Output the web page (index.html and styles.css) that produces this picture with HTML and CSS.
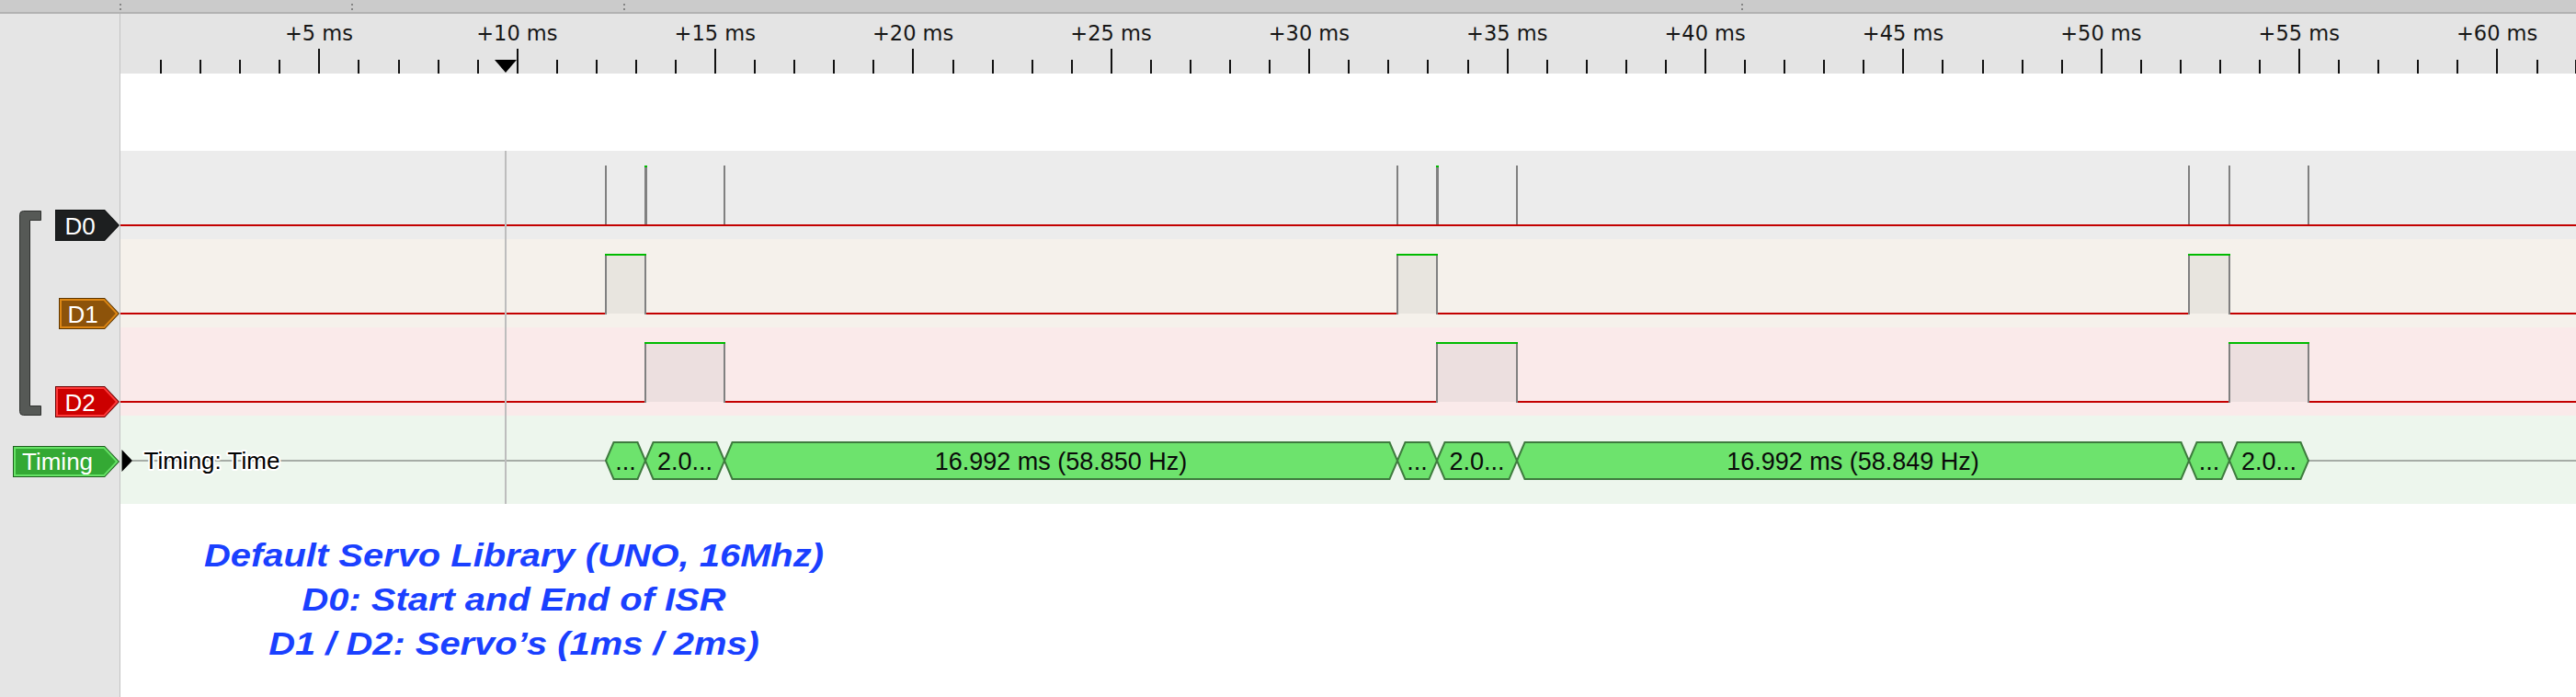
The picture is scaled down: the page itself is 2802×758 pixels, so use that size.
FILE: index.html
```html
<!DOCTYPE html>
<html lang="en">
<head>
<meta charset="utf-8">
<title>Logic capture – Servo timing</title>
<link rel="stylesheet" href="styles.css">
</head>
<body>
<div class="topbar">
  <span></span><i class="grip"></i><span></span><i class="grip"></i><span></span><i class="grip"></i><span></span><i class="grip"></i>
</div>
<div class="app">
  <aside class="sidebar">
    <div class="side-top"></div>
    <div class="group">
      <svg class="bracket" width="24" height="224" viewBox="0 0 24 224">
        <path d="M4.5 0.5H23.5V10.5H11.5V212.5H23.5V222.5H4.5Q0.5 222.5 0.5 218.5V4.5Q0.5 0.5 4.5 0.5Z"/>
      </svg>
      <div class="tags">
        <div class="tag-row">
          <svg class="tag" width="70" height="34" viewBox="0 0 70 34">
            <path class="t-out d0-out" d="M0 0H54L70 17L54 34H0Z"/>
            <path class="t-in d0-in" d="M1 1H53.6L68.6 17L53.6 33H1Z"/>
            <text x="10.5" y="26.5" class="tag-text">D0</text>
          </svg>
        </div>
        <div class="tag-row">
          <svg class="tag" width="66" height="34" viewBox="0 0 66 34">
            <path class="d1-out" d="M0 0H50L66 17L50 34H0Z"/>
            <path class="d1-mid" d="M1 1H49.6L64.6 17L49.6 33H1Z"/>
            <path class="d1-in" d="M3 3H48.8L61.8 17L48.8 31H3Z"/>
            <text x="9.5" y="26.5" class="tag-text">D1</text>
          </svg>
        </div>
        <div class="tag-row">
          <svg class="tag" width="70" height="34" viewBox="0 0 70 34">
            <path class="d2-out" d="M0 0H54L70 17L54 34H0Z"/>
            <path class="d2-mid" d="M1 1H53.6L68.6 17L53.6 33H1Z"/>
            <path class="d2-in" d="M3 3H52.8L65.8 17L52.8 31H3Z"/>
            <text x="10.5" y="26.5" class="tag-text">D2</text>
          </svg>
        </div>
      </div>
    </div>
    <div class="tag-row timing-tag-row">
      <svg class="tag" width="116" height="34" viewBox="0 0 116 34">
        <path class="tm-out" d="M0 0H100L116 17L100 34H0Z"/>
        <path class="tm-mid" d="M1 1H99.6L114.6 17L99.6 33H1Z"/>
        <path class="tm-in" d="M3 3H98.8L111.8 17L98.8 31H3Z"/>
        <text x="10" y="26" class="tag-text">Timing</text>
      </svg>
    </div>
  </aside>

  <main class="content">
    <div class="ruler">
      <div class="ruler-labels">
        <span>+5 ms</span><span>+10 ms</span><span>+15 ms</span><span>+20 ms</span><span>+25 ms</span><span>+30 ms</span>
        <span>+35 ms</span><span>+40 ms</span><span>+45 ms</span><span>+50 ms</span><span>+55 ms</span><span>+60 ms</span>
      </div>
      <svg class="ticks" width="2671" height="27" viewBox="0 0 2671 27">
        <path class="minor" d="M44 12v15M87 12v15M130 12v15M173 12v15M259 12v15M303 12v15M346 12v15M389 12v15M475 12v15M518 12v15M561 12v15M604 12v15M690 12v15M733 12v15M776 12v15M819 12v15M906 12v15M949 12v15M992 12v15M1035 12v15M1121 12v15M1164 12v15M1207 12v15M1250 12v15M1336 12v15M1379 12v15M1422 12v15M1466 12v15M1552 12v15M1595 12v15M1638 12v15M1681 12v15M1767 12v15M1810 12v15M1853 12v15M1896 12v15M1982 12v15M2026 12v15M2069 12v15M2112 12v15M2198 12v15M2241 12v15M2284 12v15M2327 12v15M2413 12v15M2456 12v15M2499 12v15M2542 12v15M2629 12v15M2671 12v15"/>
        <path class="major" d="M216 0v27M432 0v27M647 0v27M862 0v27M1078 0v27M1293 0v27M1509 0v27M1724 0v27M1939 0v27M2155 0v27M2370 0v27M2585 0v27"/>
        <polygon class="cursor-mark" points="407,12 431,12 419,26"/>
      </svg>
    </div>
    <div class="blank"></div>

    <div class="row row-d0">
      <svg class="wave" width="2671" height="96" viewBox="0 0 2671 96">
        <path class="low" d="M0 81H2671"/>
        <path class="edge" d="M528 16V80M657 16V80M1389 16V80M1519 16V80M2250 16V80M2294 16V80M2380 16V80"/>
        <path class="edge thick" d="M571.5 16V80M1432.5 16V80"/>
        <rect class="hi-fill-g" x="570" y="16" width="3" height="2"/>
        <rect class="hi-fill-g" x="1431" y="16" width="3" height="2"/>
        <rect class="cursor" x="418" y="0" width="2" height="96"/>
      </svg>
    </div>

    <div class="row row-d1">
      <svg class="wave" width="2671" height="96" viewBox="0 0 2671 96">
        <rect class="pulse-d1" x="528" y="17" width="43" height="64"/>
        <rect class="pulse-d1" x="1389" y="17" width="43" height="64"/>
        <rect class="pulse-d1" x="2250" y="17" width="44" height="64"/>
        <path class="low" d="M0 81H528M571 81H1389M1432 81H2250M2294 81H2671"/>
        <path class="edge" d="M528 17V82M571 17V82M1389 17V82M1432 17V82M2250 17V82M2294 17V82"/>
        <path class="high" d="M527 17H572M1388 17H1433M2249 17H2295"/>
        <rect class="cursor" x="418" y="0" width="2" height="96"/>
      </svg>
    </div>

    <div class="row row-d2">
      <svg class="wave" width="2671" height="96" viewBox="0 0 2671 96">
        <rect class="pulse-d2" x="571" y="17" width="86" height="64"/>
        <rect class="pulse-d2" x="1432" y="17" width="87" height="64"/>
        <rect class="pulse-d2" x="2294" y="17" width="86" height="64"/>
        <path class="low" d="M0 81H571M657 81H1432M1519 81H2294M2380 81H2671"/>
        <path class="edge" d="M571 17V82M657 17V82M1432 17V82M1519 17V82M2294 17V82M2380 17V82"/>
        <path class="high" d="M570 17H658M1431 17H1520M2293 17H2381"/>
        <rect class="cursor" x="418" y="0" width="2" height="96"/>
      </svg>
    </div>

    <div class="row row-timing">
      <svg class="wave" width="2671" height="96" viewBox="0 0 2671 96">
        <path class="trace" d="M13 49H528M2380 49H2671"/>
        <rect class="cursor" x="418" y="0" width="2" height="96"/>
        <polygon class="expander" points="1.5,37 13,49 1.5,61"/>
        <text class="trace-title" x="25.5" y="57.5">Timing: Time</text>

        <polygon class="bubble" points="528,49 536.5,29 562.5,29 571,49 562.5,69 536.5,69"/>
        <polygon class="bubble" points="571,49 579.5,29 648.5,29 657,49 648.5,69 579.5,69"/>
        <polygon class="bubble" points="657,49 665.5,29 1380.5,29 1389,49 1380.5,69 665.5,69"/>
        <polygon class="bubble" points="1389,49 1397.5,29 1423.5,29 1432,49 1423.5,69 1397.5,69"/>
        <polygon class="bubble" points="1432,49 1440.5,29 1510.5,29 1519,49 1510.5,69 1440.5,69"/>
        <polygon class="bubble" points="1519,49 1527.5,29 2241.5,29 2250,49 2241.5,69 1527.5,69"/>
        <polygon class="bubble" points="2250,49 2258.5,29 2285.5,29 2294,49 2285.5,69 2258.5,69"/>
        <polygon class="bubble" points="2294,49 2302.5,29 2371.5,29 2380,49 2371.5,69 2302.5,69"/>

        <text class="bubble-text" x="549.5" y="59">...</text>
        <text class="bubble-text" x="614" y="59">2.0...</text>
        <text class="bubble-text" x="1023" y="59">16.992 ms (58.850 Hz)</text>
        <text class="bubble-text" x="1410.5" y="59">...</text>
        <text class="bubble-text" x="1475.5" y="59">2.0...</text>
        <text class="bubble-text" x="1884.5" y="59">16.992 ms (58.849 Hz)</text>
        <text class="bubble-text" x="2272" y="59">...</text>
        <text class="bubble-text" x="2337" y="59">2.0...</text>
      </svg>
    </div>

    <div class="caption">
      Default Servo Library (UNO, 16Mhz)<br>
      D0: Start and End of ISR<br>
      D1 / D2: Servo’s (1ms / 2ms)
    </div>
  </main>
</div>
</body>
</html>
```

FILE: styles.css
```css
html, body {
  margin: 0;
  padding: 0;
}

body {
  width: 2802px;
  height: 758px;
  overflow: hidden;
  background: #ffffff;
  font-family: "Liberation Sans", Arial, sans-serif;
}

/* ---------- top strip ---------- */
.topbar {
  height: 13px;
  background: #cbcbcb;
  border-bottom: 2px solid #b2b2b2;
  display: grid;
  grid-template-columns: 130px 2px 250px 2px 294px 2px 1214px 2px;
}

.grip {
  margin-top: 4px;
  height: 7px;
  background: linear-gradient(#858585 0 2px, transparent 2px 5px, #858585 5px 7px);
}

/* ---------- main area ---------- */
.app {
  display: flex;
  height: 743px;
}

.sidebar {
  flex: none;
  width: 130px;
  border-right: 1px solid #c3c3c3;
  background: #e5e5e5;
  display: flex;
  flex-direction: column;
}

.side-top {
  height: 149px;
}

.group {
  display: flex;
  padding-left: 21px;
}

.bracket {
  display: block;
  margin-top: 65px;
  flex: none;
}

.bracket path {
  fill: #565956;
  stroke: #2f312f;
  stroke-width: 1;
}

.tags {
  flex: 1;
  display: flex;
  flex-direction: column;
}

.tag-row {
  height: 96px;
  display: flex;
  justify-content: flex-end;
  align-items: flex-start;
  padding-top: 64px;
  box-sizing: border-box;
}

.timing-tag-row {
  padding-top: 32px;
}

.tag {
  display: block;
}

.tag-text {
  font-family: "Liberation Sans", Arial, sans-serif;
  font-size: 26px;
  fill: #ffffff;
}

.d0-out { fill: #0f1112; }
.d0-in  { fill: #1d1f20; }

.d1-out { fill: #5a3400; }
.d1-mid { fill: #dc8614; }
.d1-in  { fill: #8d530a; }

.d2-out { fill: #6e0000; }
.d2-mid { fill: #ff3b3b; }
.d2-in  { fill: #cc0000; }

.tm-out { fill: #1d5e1d; }
.tm-mid { fill: #66e266; }
.tm-in  { fill: #34a934; }

/* ---------- content ---------- */
.content {
  flex: 1;
  min-width: 0;
  overflow: hidden;
  display: flex;
  flex-direction: column;
}

.ruler {
  height: 65px;
  background: #e4e4e4;
  overflow: hidden;
}

.ruler-labels {
  height: 38px;
  box-sizing: border-box;
  padding-top: 8px;
  padding-left: 108.3px;
  display: flex;
  overflow: hidden;
  font-family: "DejaVu Sans", Verdana, sans-serif;
  font-size: 22.5px;
  line-height: 26px;
  color: #161616;
}

.ruler-labels span {
  flex: 0 0 215.375px;
  text-align: center;
  white-space: nowrap;
}

.ticks {
  display: block;
}

.ticks .minor,
.ticks .major {
  stroke: #111111;
  stroke-width: 2;
  fill: none;
}

.cursor-mark {
  fill: #000000;
}

.blank {
  height: 84px;
  background: #ffffff;
}

.row {
  height: 96px;
}

.row-d0 { background: #ececec; }
.row-d1 { background: #f5f1eb; }
.row-d2 { background: #faeaea; }
.row-timing { background: #edf6ed; }

.wave {
  display: block;
}

.low {
  stroke: #c30000;
  stroke-width: 2;
  fill: none;
}

.high {
  stroke: #00bb00;
  stroke-width: 2;
  fill: none;
}

.hi-fill-g {
  fill: #00bb00;
}

.edge {
  stroke: #808080;
  stroke-width: 2;
  fill: none;
}

.edge.thick {
  stroke-width: 3;
}

.pulse-d1 { fill: #e8e5df; }
.pulse-d2 { fill: #ecdfdf; }

.cursor {
  fill: #bdbdbd;
}

.trace {
  stroke: #a6aca6;
  stroke-width: 2;
  fill: none;
}

.expander {
  fill: #000000;
}

.trace-title {
  font-family: "Liberation Sans", Arial, sans-serif;
  font-size: 26px;
  fill: #000000;
  stroke: #ffffff;
  stroke-width: 4px;
  stroke-linejoin: round;
  paint-order: stroke;
}

.bubble {
  fill: #6de36d;
  stroke: #3e7b3e;
  stroke-width: 2;
  stroke-linejoin: miter;
}

.bubble-text {
  font-family: "Liberation Sans", Arial, sans-serif;
  font-size: 27px;
  fill: #0a0a0a;
  text-anchor: middle;
}

/* ---------- annotation ---------- */
.caption {
  width: 856px;
  padding-top: 32px;
  text-align: center;
  font-family: "Liberation Sans", Arial, sans-serif;
  font-style: italic;
  font-weight: bold;
  font-size: 35px;
  line-height: 48px;
  color: #1a40ff;
  transform: scaleX(1.14);
  white-space: nowrap;
}
```
